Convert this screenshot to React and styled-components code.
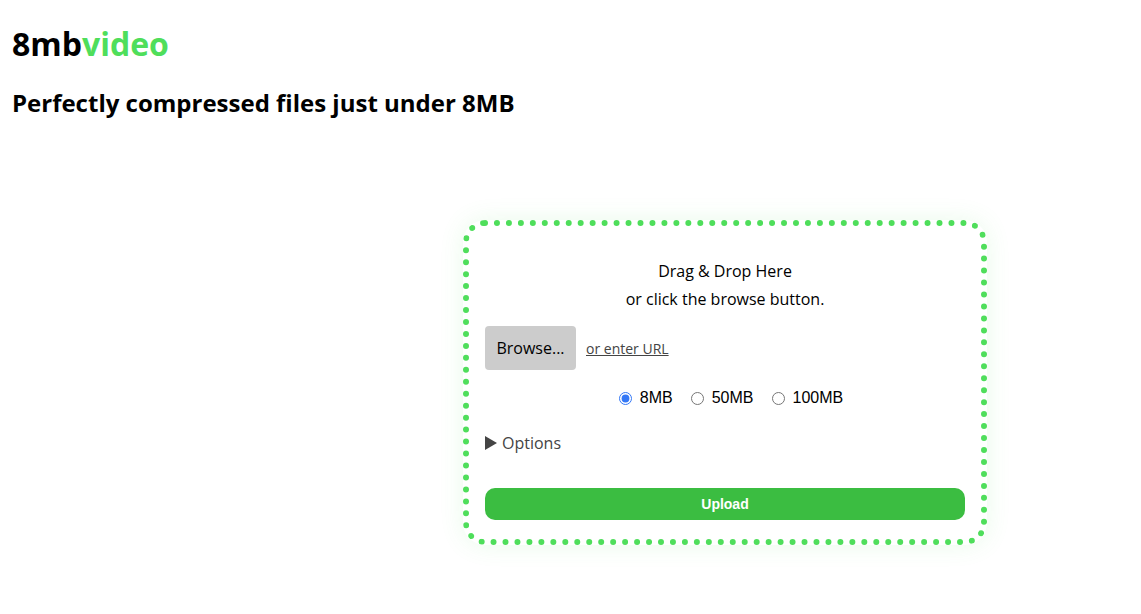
import React, { useState } from 'react';
import styled, { createGlobalStyle } from 'styled-components';

const GlobalStyle = createGlobalStyle`
  body {
    margin: 0;
    background: #fff;
    font-family: "Open Sans", "Liberation Sans", sans-serif;
    color: #000;
  }
`;

const Page = styled.div`
  padding: 12px 12px 40px;
`;

const Logo = styled.h1`
  margin: 10px 0 0;
  font-size: 32px;
  font-weight: 700;
  line-height: 44px;
`;

const Accent = styled.span`
  color: #4fde5b;
`;

const Tagline = styled.h2`
  margin: 21px 0 0;
  font-size: 24px;
  font-weight: 700;
  line-height: 32px;
`;

const Layout = styled.div`
  display: grid;
  grid-template-columns: 451px 524px;
  margin-top: 101px;
`;

const DropZone = styled.form`
  grid-column: 2;
  border: 6px dotted #4fde5b;
  border-radius: 22px;
  padding: 31px 16px 19px;
  box-shadow: 0 0 24px rgba(79, 222, 91, 0.12);
  font-size: 16px;
`;

const Hint = styled.p`
  margin: 0;
  text-align: center;
  line-height: 28px;
`;

const BrowseRow = styled.div`
  display: flex;
  align-items: center;
  gap: 10px;
  margin-top: 13px;
`;

const BrowseButton = styled.button`
  width: 91px;
  height: 44px;
  padding: 0;
  border: none;
  border-radius: 4px;
  background: #cccccc;
  font-family: "Open Sans", sans-serif;
  font-size: 16px;
  color: #000;
`;

const UrlLink = styled.a`
  font-size: 14px;
  color: #444;
  text-decoration: underline;
`;

const Sizes = styled.div`
  display: flex;
  justify-content: center;
  gap: 18px;
  margin-top: 19px;
  padding-left: 12px;
  font-family: "Liberation Sans", Arial, sans-serif;
  font-size: 16px;
`;

const SizeLabel = styled.label`
  display: flex;
  align-items: center;
  gap: 8px;
`;

const Radio = styled.input`
  margin: 0;
  width: 13px;
  height: 13px;
  accent-color: #3478f6;
`;

const Options = styled.div`
  display: flex;
  align-items: center;
  gap: 5px;
  margin-top: 25px;
  color: #444;
  font-size: 16px;
`;

const Arrow = styled.span`
  width: 0;
  height: 0;
  border-top: 7px solid transparent;
  border-bottom: 7px solid transparent;
  border-left: 12px solid #444;
`;

const UploadButton = styled.button`
  display: block;
  width: 100%;
  height: 32px;
  margin-top: 34px;
  border: none;
  border-radius: 10px;
  background: #3bbd41;
  color: #fff;
  font-family: "Liberation Sans", Arial, sans-serif;
  font-weight: 700;
  font-size: 14px;
`;

const SIZES = ['8MB', '50MB', '100MB'];

const App = () => {
  const [size, setSize] = useState('8MB');

  return (
    <Page>
      <GlobalStyle />
      <Logo>
        8mb<Accent>video</Accent>
      </Logo>
      <Tagline>Perfectly compressed files just under 8MB</Tagline>
      <Layout>
        <DropZone onSubmit={(e) => e.preventDefault()}>
          <Hint>Drag &amp; Drop Here</Hint>
          <Hint>or click the browse button.</Hint>
          <BrowseRow>
            <BrowseButton type="button">Browse...</BrowseButton>
            <UrlLink href="#">or enter URL</UrlLink>
          </BrowseRow>
          <Sizes>
            {SIZES.map((s) => (
              <SizeLabel key={s}>
                <Radio
                  type="radio"
                  name="size"
                  checked={size === s}
                  onChange={() => setSize(s)}
                />
                {s}
              </SizeLabel>
            ))}
          </Sizes>
          <Options>
            <Arrow />
            Options
          </Options>
          <UploadButton type="submit">Upload</UploadButton>
        </DropZone>
      </Layout>
    </Page>
  );
};

export default App;
